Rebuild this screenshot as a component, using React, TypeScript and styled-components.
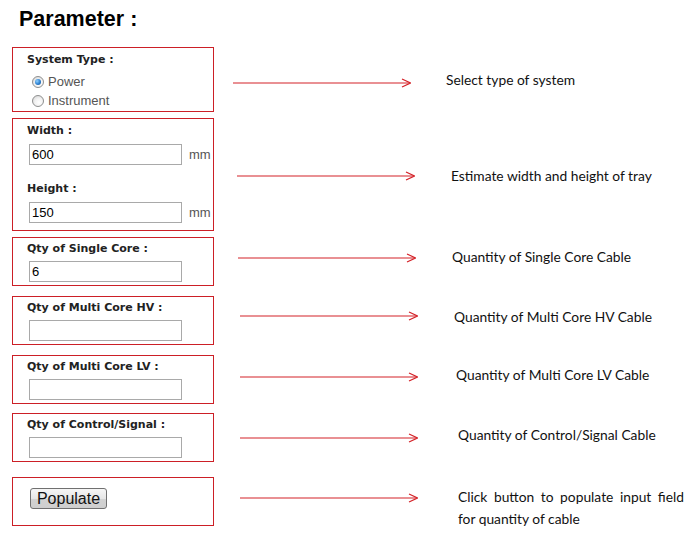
import styled, {createGlobalStyle} from 'styled-components';

const GlobalStyle = createGlobalStyle`
    html, body {
        margin: 0;
        padding: 0;
        background: #ffffff;
    }
    body {
        font-family: "Liberation Sans", Arial, sans-serif;
    }
`

const Page = styled.div`
    width: 694px;
    height: 551px;
    padding-left: 12px;
    box-sizing: border-box;
    overflow: hidden;
`

const Title = styled.h1`
    margin: 7px 0 0 7px;
    font-family: "Liberation Sans", Arial, sans-serif;
    font-size: 21.5px;
    line-height: 24px;
    font-weight: bold;
    color: #000;
`

const Row = styled.div<{top: number}>`
    display: flex;
    align-items: flex-start;
    margin-top: ${({top}) => top}px;
`

const Box = styled.div<{pt: number; pb: number}>`
    width: 202px;
    box-sizing: border-box;
    border: 1px solid #cc1f26;
    padding: ${({pt, pb}) => `${pt}px 0 ${pb}px 14px`};
    display: flex;
    flex-direction: column;
`

const Label = styled.div<{gap?: number}>`
    font-family: "DejaVu Sans", Verdana, sans-serif;
    font-size: 11px;
    font-weight: bold;
    line-height: 14px;
    color: #222;
    margin-top: ${({gap}) => gap || 0}px;
`

const RadioList = styled.div`
    display: flex;
    flex-direction: column;
    margin-top: 5px;
`

const RadioRow = styled.label`
    display: flex;
    align-items: center;
    height: 19px;
    padding-left: 5px;
    font-family: "Liberation Sans", Arial, sans-serif;
    font-size: 13px;
    color: #555;
`

const Radio = styled.input.attrs({type: 'radio'})`
    appearance: none;
    -webkit-appearance: none;
    margin: 0 4px 0 0;
    width: 12px;
    height: 12px;
    border-radius: 50%;
    border: 1px solid #8e8f8f;
    box-sizing: border-box;
    background: radial-gradient(circle at 60% 65%, #ffffff 0%, #f2f2f2 45%, #cfcfcf 100%);
    position: relative;

    &:checked::after {
        content: '';
        position: absolute;
        left: 2px;
        top: 2px;
        width: 6px;
        height: 6px;
        border-radius: 50%;
        background: radial-gradient(circle at 35% 35%, #8fd0ff 0%, #2b7fd0 55%, #164f8c 100%);
    }
`

const FieldLine = styled.div`
    display: flex;
    align-items: center;
    margin-top: 6px;
    padding-left: 2px;
`

const TextInput = styled.input<{sm?: boolean}>`
    width: 153px;
    height: 21px;
    box-sizing: border-box;
    border: 1px solid #a9a9a9;
    padding: 0 2px;
    margin: ${({sm}) => sm ? '5px 0 0 2px' : '0'};
    font-family: "Liberation Sans", Arial, sans-serif;
    font-size: 13px;
    color: #000;
    outline: none;
`

const Unit = styled.span`
    margin-left: 7px;
    font-family: "Liberation Sans", Arial, sans-serif;
    font-size: 13px;
    color: #555;
`

const Button = styled.button`
    width: 77px;
    height: 21px;
    margin-left: 3px;
    padding: 0;
    border: 1px solid #707070;
    border-radius: 3px;
    background: linear-gradient(#f6f6f6, #e6e6e6 50%, #d2d2d2 51%, #cfcfcf);
    font-family: "Liberation Sans", Arial, sans-serif;
    font-size: 16px;
    line-height: 19px;
    color: #111;
    align-self: flex-start;
`

const Callout = styled.div<{dx: number; dy: number}>`
    display: flex;
    align-items: flex-start;
    margin-left: ${({dx}) => dx}px;
    margin-top: ${({dy}) => dy}px;
`

const Note = styled.div<{dx: number; dy: number; w?: number}>`
    margin-left: ${({dx}) => dx}px;
    margin-top: ${({dy}) => dy}px;
    width: ${({w}) => w ? `${w}px` : 'auto'};
    font-family: Lato, "Open Sans", sans-serif;
    font-size: 13.8px;
    line-height: 22px;
    color: #111;
    text-align: ${({w}) => w ? 'justify' : 'left'};
    white-space: ${({w}) => w ? 'normal' : 'nowrap'};
`

const Arrow = () => (
    <svg width="178" height="22" viewBox="0 0 178 22">
        <line x1="0" y1="11" x2="177" y2="11" stroke="#d42228" strokeWidth="1.2" />
        <polyline points="169,7 177.5,11 169,15" fill="none" stroke="#d42228" strokeWidth="1.2" />
    </svg>
)

// arrow placement taken from the reference, per row
const notes = [
    {arrowX: 19, arrowY: 36, noteX: 35, noteY: -3, text: 'Select type of system'},
    {arrowX: 23, arrowY: 58, noteX: 36, noteY: 0, text: 'Estimate width and height of tray'},
    {arrowX: 24, arrowY: 21, noteX: 36, noteY: -1, text: 'Quantity of Single Core Cable'},
    {arrowX: 26, arrowY: 20, noteX: 36, noteY: 1, text: 'Quantity of Multi Core HV Cable'},
    {arrowX: 26, arrowY: 22, noteX: 38, noteY: -2, text: 'Quantity of Multi Core LV Cable'},
    {arrowX: 26, arrowY: 25, noteX: 40, noteY: -3, text: 'Quantity of Control/Signal Cable'},
    {arrowX: 26, arrowY: 21, noteX: 40, noteY: -1, text: 'Click button to populate input field for quantity of cable', w: 226},
];

const Side = ({i}: {i: number}) => {
    const n = notes[i];
    return (
        <Callout dx={n.arrowX} dy={n.arrowY - 11}>
            <Arrow />
            <Note dx={n.noteX} dy={n.noteY} w={n.w}>{n.text}</Note>
        </Callout>
    );
};

const QtyBox = ({label, value, top, i}: {label: string; value?: string; top: number; i: number}) => (
    <Row top={top}>
        <Box pt={4} pb={3}>
            <Label>{label}</Label>
            <TextInput sm defaultValue={value} />
        </Box>
        <Side i={i} />
    </Row>
);

const App = () => {
    return (
        <Page>
            <GlobalStyle />
            <Title>Parameter :</Title>
            <Row top={16}>
                <Box pt={5} pb={1}>
                    <Label>System Type :</Label>
                    <RadioList>
                        <RadioRow><Radio name="sys" defaultChecked />Power</RadioRow>
                        <RadioRow><Radio name="sys" />Instrument</RadioRow>
                    </RadioList>
                </Box>
                <Side i={0} />
            </Row>
            <Row top={6}>
                <Box pt={5} pb={7}>
                    <Label>Width :</Label>
                    <FieldLine>
                        <TextInput defaultValue="600" />
                        <Unit>mm</Unit>
                    </FieldLine>
                    <Label gap={17}>Height :</Label>
                    <FieldLine>
                        <TextInput defaultValue="150" />
                        <Unit>mm</Unit>
                    </FieldLine>
                </Box>
                <Side i={1} />
            </Row>
            <QtyBox top={6} i={2} label="Qty of Single Core :" value="6" />
            <QtyBox top={10} i={3} label="Qty of Multi Core HV :" />
            <QtyBox top={10} i={4} label="Qty of Multi Core LV :" />
            <QtyBox top={9} i={5} label="Qty of Control/Signal :" />
            <Row top={15}>
                <Box pt={10} pb={16}>
                    <Button>Populate</Button>
                </Box>
                <Side i={6} />
            </Row>
        </Page>
    );
};

export default App;
